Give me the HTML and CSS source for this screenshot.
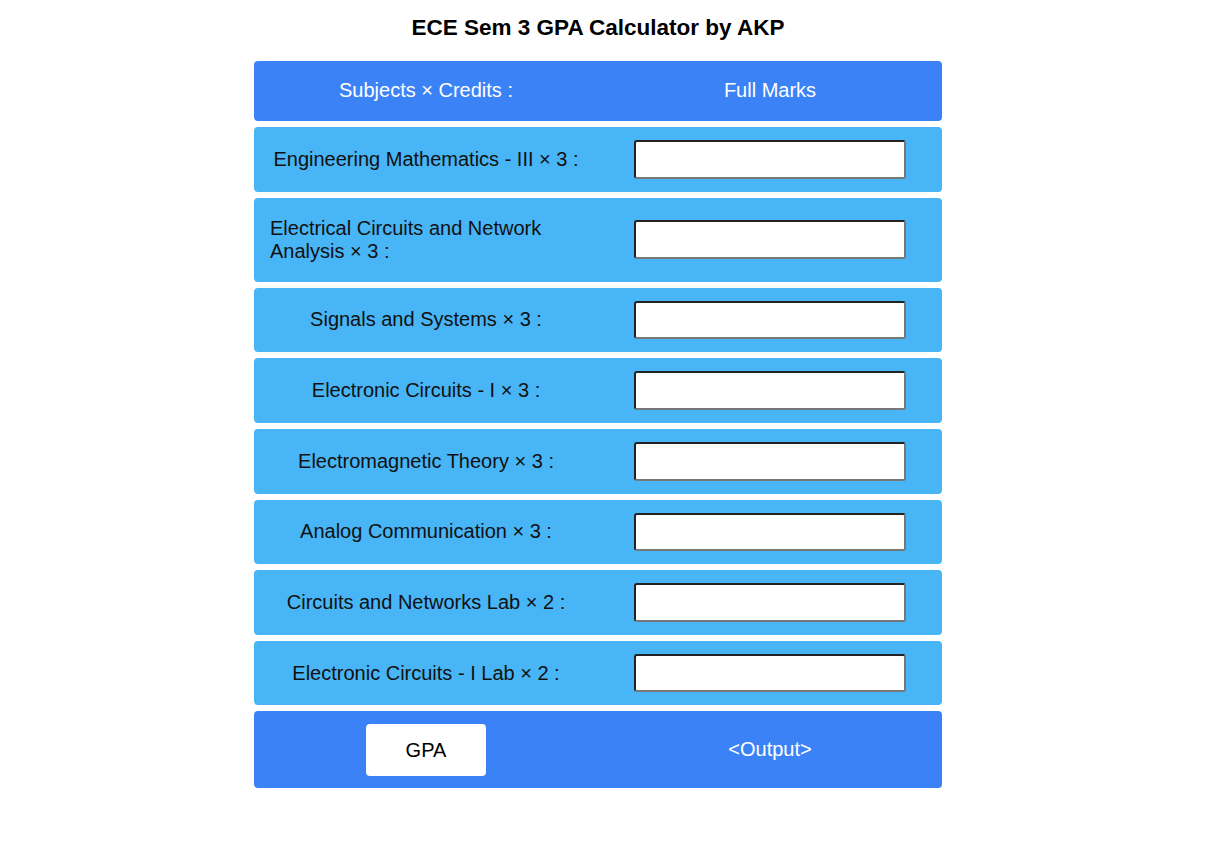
FILE: index.html
```html
<!DOCTYPE html>
<html lang="en">
<head>
<meta charset="utf-8">
<title>ECE Sem 3 GPA Calculator by AKP</title>
<link rel="stylesheet" href="styles.css">
</head>
<body>
<div class="page">
  <h1 class="title">ECE Sem 3 GPA Calculator by AKP</h1>
  <div class="calc">
    <div class="row head">
      <div class="cell left"><span class="label">Subjects × Credits :</span></div>
      <div class="cell right"><span class="label">Full Marks</span></div>
    </div>
    <div class="row subj">
      <div class="cell left"><span class="label">Engineering Mathematics - III × 3 :</span></div>
      <div class="cell right"><input class="marks" type="text"></div>
    </div>
    <div class="row subj">
      <div class="cell left"><span class="label">Electrical Circuits and Network Analysis × 3 :</span></div>
      <div class="cell right"><input class="marks" type="text"></div>
    </div>
    <div class="row subj">
      <div class="cell left"><span class="label">Signals and Systems × 3 :</span></div>
      <div class="cell right"><input class="marks" type="text"></div>
    </div>
    <div class="row subj">
      <div class="cell left"><span class="label">Electronic Circuits - I × 3 :</span></div>
      <div class="cell right"><input class="marks" type="text"></div>
    </div>
    <div class="row subj">
      <div class="cell left"><span class="label">Electromagnetic Theory × 3 :</span></div>
      <div class="cell right"><input class="marks" type="text"></div>
    </div>
    <div class="row subj">
      <div class="cell left"><span class="label">Analog Communication × 3 :</span></div>
      <div class="cell right"><input class="marks" type="text"></div>
    </div>
    <div class="row subj">
      <div class="cell left"><span class="label">Circuits and Networks Lab × 2 :</span></div>
      <div class="cell right"><input class="marks" type="text"></div>
    </div>
    <div class="row subj">
      <div class="cell left"><span class="label">Electronic Circuits - I Lab × 2 :</span></div>
      <div class="cell right"><input class="marks" type="text"></div>
    </div>
    <div class="row foot">
      <div class="cell left"><button class="gpa" type="button">GPA</button></div>
      <div class="cell right"><span class="label">&lt;Output&gt;</span></div>
    </div>
  </div>
</div>
</body>
</html>
```

FILE: styles.css
```css
* { box-sizing: border-box; }

html, body {
  margin: 0;
  padding: 0;
  background: #ffffff;
}

body {
  font-family: "Liberation Sans", Arial, sans-serif;
  color: #000;
}

.page {
  width: 1196px;
  display: flex;
  flex-direction: column;
  align-items: center;
}

.title {
  font-size: 22.5px;
  font-weight: bold;
  line-height: 25px;
  margin: 15px 0 21px;
  text-align: center;
}

.calc {
  width: 688px;
  display: flex;
  flex-direction: column;
  gap: 6px;
}

.row {
  display: grid;
  grid-template-columns: 1fr 1fr;
  border-radius: 4px;
}

.head, .foot {
  background: #3b82f6;
  color: #ffffff;
}

.subj {
  background: #47b5f6;
  color: #111111;
}

.cell {
  display: flex;
  align-items: center;
  justify-content: center;
  min-width: 0;
}

.left {
  padding: 0 16px;
}

.label {
  font-size: 20px;
  line-height: 23px;
  text-align: left;
}

.head .cell {
  padding-top: 18px;
  padding-bottom: 19px;
}

.subj .left {
  padding-top: 19px;
  padding-bottom: 19px;
}

.marks {
  width: 272px;
  height: 38.65px;
  margin: 13px 0;
  background: #ffffff;
  border: 2px solid;
  border-color: #222222 #777777 #777777 #222222;
  border-radius: 3px;
  padding: 1px 4px;
  font-size: 16px;
  font-family: "Liberation Sans", Arial, sans-serif;
}

.gpa {
  width: 120px;
  height: 52px;
  margin: 13px 0 12px;
  background: #ffffff;
  border: none;
  border-radius: 4px;
  font-family: "Liberation Sans", Arial, sans-serif;
  font-size: 20px;
  color: #000;
}
```
